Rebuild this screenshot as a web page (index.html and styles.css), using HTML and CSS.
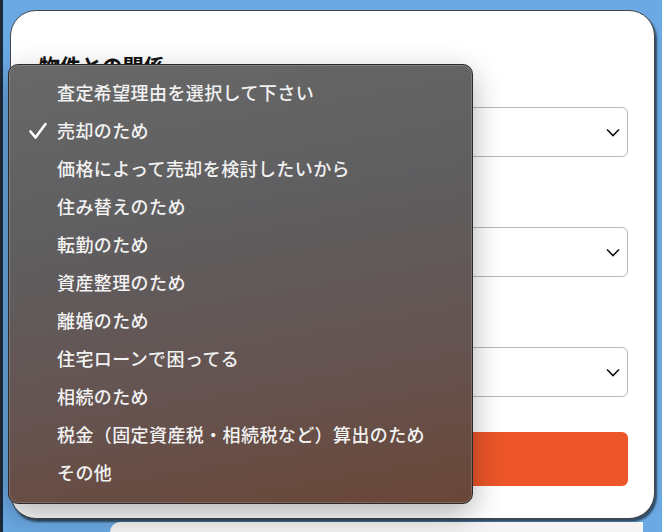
FILE: index.html
```html
<!DOCTYPE html>
<html lang="ja">
<head>
    <meta charset="UTF-8">
    <meta name="viewport" content="width=device-width, initial-scale=1.0">
    <title>査定依頼フォーム</title>
    <link rel="stylesheet" href="styles.css">
</head>
<body>
    <div class="page">
        <div class="card">
            <h2 class="title">物件との関係</h2>

            <div class="select-box">
                <svg class="chevron" width="14" height="9" viewBox="0 0 14 9"><path d="M1 1.5 L7 7.5 L13 1.5" fill="none" stroke="#111" stroke-width="1.6"/></svg>
            </div>

            <div class="field">
                <div class="select-box">
                    <svg class="chevron" width="14" height="9" viewBox="0 0 14 9"><path d="M1 1.5 L7 7.5 L13 1.5" fill="none" stroke="#111" stroke-width="1.6"/></svg>
                </div>
            </div>

            <div class="field">
                <div class="select-box">
                    <svg class="chevron" width="14" height="9" viewBox="0 0 14 9"><path d="M1 1.5 L7 7.5 L13 1.5" fill="none" stroke="#111" stroke-width="1.6"/></svg>
                </div>
            </div>

            <button class="submit" type="button"></button>
        </div>
        <div class="next-card"></div>
    </div>

    <!-- open select menu -->
    <ul class="menu">
        <li>査定希望理由を選択して下さい</li>
        <li class="checked">
            <svg class="check" width="20" height="18" viewBox="0 0 20 18"><path d="M2.5 9.5 L7.5 15.5 L17.5 2" fill="none" stroke="#fff" stroke-width="2.6" stroke-linecap="round" stroke-linejoin="round"/></svg>
            売却のため
        </li>
        <li>価格によって売却を検討したいから</li>
        <li>住み替えのため</li>
        <li>転勤のため</li>
        <li>資産整理のため</li>
        <li>離婚のため</li>
        <li>住宅ローンで困ってる</li>
        <li>相続のため</li>
        <li>税金（固定資産税・相続税など）算出のため</li>
        <li>その他</li>
    </ul>
</body>
</html>
```

FILE: styles.css
```css
html {
    overflow: hidden;
}
body {
    margin: 0;
    height: 532px;
    overflow: hidden;
    background-color: #6aa9e3;
    border-left: 3px solid #1d2a3a;
    font-family: "Noto Sans CJK JP", "Noto Sans", sans-serif;
    color: #111;
}
.page {
    padding: 10px 7px 0 7px;
}
.card {
    background: #ffffff;
    border: 1px solid #444;
    border-radius: 26px;
    box-shadow: 2px 3px 2px rgba(0, 0, 0, 0.55);
    padding: 36px 26px 30px 28px;
    height: 441px;
}
.title {
    margin: 0 0 24px 0;
    font-size: 21px;
    font-weight: 600;
    line-height: 36px;
}
.field {
    margin-top: 70px;
}
.select-box {
    height: 48px;
    border: 1px solid #b8b8b8;
    border-radius: 6px;
    display: flex;
    align-items: center;
    justify-content: flex-end;
    padding-right: 7px;
}
.submit {
    display: block;
    width: 100%;
    height: 54px;
    margin-top: 35px;
    border: none;
    border-radius: 6px;
    background: #ec5629;
}
.next-card {
    margin: 3px 12px 0 100px;
    height: 10px;
    background: #f4f4f4;
    border-top-left-radius: 24px;
}
.menu {
    position: absolute;
    left: 8px;
    top: 64px;
    width: 463px;
    height: 418px;
    margin: 0;
    padding: 8px 0 12px 0;
    list-style: none;
    border: 1px solid #2a2a2a;
    border-radius: 10px;
    background: linear-gradient(170deg, #686868 0%, #5f5e60 35%, #655350 70%, #6a4637 100%);
    box-shadow: inset 0 0 0 1px rgba(255, 255, 255, 0.18), 0 10px 30px rgba(0, 0, 0, 0.3);
}
.menu li {
    position: relative;
    height: 38px;
    line-height: 38px;
    padding-left: 48px;
    font-size: 18px;
    font-weight: 500;
    letter-spacing: 0.4px;
    color: #f2f2f2;
}
.check {
    position: absolute;
    left: 19px;
    top: 11px;
}
```
